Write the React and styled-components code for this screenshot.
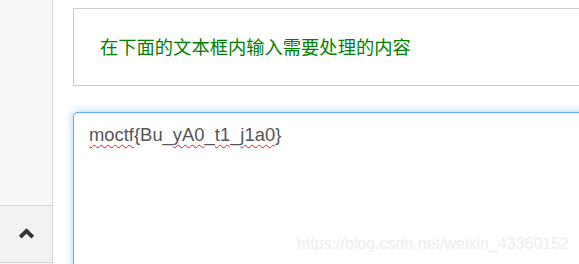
import styled, { createGlobalStyle } from "styled-components";

const GlobalStyle = createGlobalStyle`
  html, body {
    margin: 0;
    padding: 0;
    height: 100%;
    overflow: hidden;
    background: #fff;
    font-family: "Liberation Sans", Arial, sans-serif;
  }
  #root {
    height: 100%;
  }
`;

const Page = styled.div`
  position: relative;
  display: flex;
  height: 100vh;
`;

const Sidebar = styled.aside`
  flex: 0 0 52px;
  display: flex;
  flex-direction: column;
  justify-content: flex-end;
  padding-bottom: 1px;
  background: #f8f8f8;
  border-right: 1px solid #d6d6d6;
`;

const Toggle = styled.button`
  display: flex;
  align-items: center;
  justify-content: center;
  height: 58px;
  padding: 0 0 2px;
  border: 0;
  border-top: 1px solid #d4d4d4;
  border-bottom: 1px solid #d4d4d4;
  background: #f2f2f2;
  color: #333;
  cursor: pointer;
`;

const Main = styled.main`
  flex: 1;
  min-width: 0;
  padding: 8px 0 0 20px;
  overflow: hidden;
`;

const Panel = styled.div`
  display: flex;
  align-items: center;
  box-sizing: border-box;
  width: 620px;
  height: 78px;
  padding: 0 26px 2px;
  border: 1px solid #cccccc;
  color: #008000;
  font-family: "Noto Sans CJK SC", "Liberation Sans", sans-serif;
  font-size: 18.3px;
`;

const Input = styled.div`
  box-sizing: border-box;
  width: 620px;
  height: 200px;
  margin-top: 26px;
  padding: 9px 15px;
  border: 1px solid #66afe9;
  border-radius: 4px;
  box-shadow: inset 0 1px 1px rgba(0, 0, 0, 0.075),
    0 0 8px rgba(102, 175, 233, 0.6);
  color: #555;
  font-size: 18.4px;
  line-height: 1.42857;
`;

const Misspelled = styled.span`
  text-decoration: underline wavy #e02020;
  text-decoration-thickness: 1px;
  text-decoration-skip-ink: none;
  text-underline-offset: 3px;
`;

const Watermark = styled.div`
  position: absolute;
  right: 10px;
  bottom: 11px;
  color: #ededed;
  font-size: 16px;
  pointer-events: none;
`;

function ChevronUp() {
  return (
    <svg width="17" height="12" viewBox="0 0 17 12">
      <path
        d="M2.2 10.2 L8.5 3.9 L14.8 10.2"
        fill="none"
        stroke="#333"
        strokeWidth="3.8"
        strokeLinejoin="miter"
      />
    </svg>
  );
}

function App() {
  return (
    <>
      <GlobalStyle />
      <Page>
        <Sidebar>
          <Toggle aria-label="collapse">
            <ChevronUp />
          </Toggle>
        </Sidebar>
        <Main>
          <Panel>在下面的文本框内输入需要处理的内容</Panel>
          <Input>
            <Misspelled>moctf</Misspelled>
            {"{Bu_"}
            <Misspelled>yA0</Misspelled>_<Misspelled>t1</Misspelled>_
            <Misspelled>j1a0</Misspelled>
            {"}"}
          </Input>
        </Main>
        <Watermark>https://blog.csdn.net/weixin_43360152</Watermark>
      </Page>
    </>
  );
}

export default App;
